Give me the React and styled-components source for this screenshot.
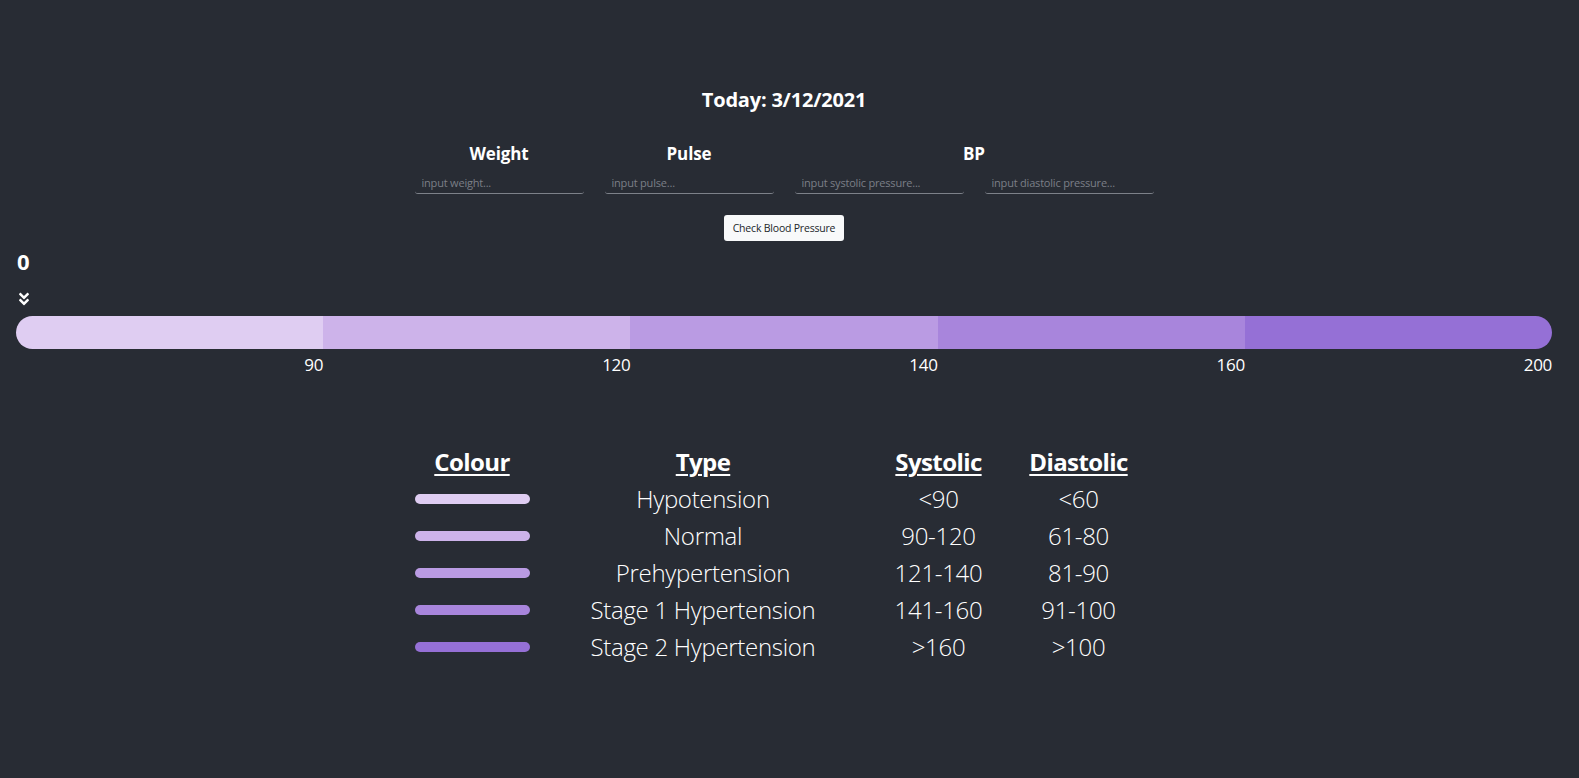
import React from "react";
import styled, { createGlobalStyle } from "styled-components";
import { FaAngleDoubleDown } from "react-icons/fa";

const Global = createGlobalStyle`
  html, body { margin: 0; padding: 0; background: #282c34; }
  body { font-family: "Open Sans", "Noto Sans", sans-serif; color: #ffffff; }
`;

const Page = styled.div`
  width: 1568px;
  min-height: 778px;
  background: #282c34;
  display: flex;
  flex-direction: column;
  align-items: center;
  padding-top: 86px;
  box-sizing: border-box;
`;

const Title = styled.h1`
  margin: 0;
  font-size: 20px;
  font-weight: 700;
  line-height: 28px;
  letter-spacing: -0.2px;
`;

const Form = styled.div`
  display: flex;
  gap: 21px;
  margin-top: 29px;
`;

const Field = styled.div`
  display: flex;
  flex-direction: column;
  align-items: center;
`;

const Label = styled.div`
  font-size: 17px;
  font-weight: 700;
  line-height: 22px;
  letter-spacing: -0.1px;
`;

const Inputs = styled.div`
  display: flex;
  gap: 21px;
  margin-top: 7px;
`;

const Input = styled.input`
  width: 169px;
  height: 22px;
  box-sizing: border-box;
  background: transparent;
  border: none;
  border-bottom: 1px solid #7d8189;
  border-radius: 0 0 3px 3px;
  color: #fff;
  font-family: "Open Sans", sans-serif;
  font-size: 11px;
  letter-spacing: -0.2px;
  padding: 0 7px 1px;
  outline: none;
  &::placeholder { color: #7b7f87; }
`;

const Button = styled.button`
  margin-top: 21px;
  width: 120px;
  height: 26px;
  background: #f8f9fa;
  border: none;
  border-radius: 3px;
  font-family: "Open Sans", sans-serif;
  font-size: 10.5px;
  letter-spacing: -0.2px;
  color: #212529;
  padding: 0;
`;

const Gauge = styled.div`
  align-self: stretch;
  margin: 6px 16px 0;
  display: flex;
  flex-direction: column;
`;

const Value = styled.div`
  font-size: 22px;
  font-weight: 700;
  line-height: 28px;
  padding-left: 1px;
`;

const Pointer = styled.div`
  height: 16px;
  margin-top: 16px;
  display: flex;
  align-items: center;
  font-size: 16px;
  color: #fff;
`;

const Bar = styled.div`
  margin-top: 9px;
  display: flex;
  height: 33px;
  border-radius: 17px;
  overflow: hidden;
`;

const Segment = styled.div`
  flex: 1;
  background: ${(p) => p.$color};
`;

const Ticks = styled.div`
  display: flex;
  padding-top: 2px;
`;

const Tick = styled.div`
  flex: 1;
  text-align: right;
  font-size: 17px;
  line-height: 28px;
  letter-spacing: -0.3px;
`;

const Table = styled.div`
  margin-top: 64px;
  display: grid;
  grid-template-columns: 118px 344px 127px 153px;
  grid-auto-rows: 37px;
  align-items: center;
  justify-items: center;
`;

const Head = styled.div`
  font-size: 24px;
  font-weight: 700;
  text-decoration: underline;
  text-underline-offset: 3px;
  text-decoration-thickness: 2px;
  letter-spacing: -0.6px;
`;

const Cell = styled.div`
  font-size: 24px;
  font-weight: 300;
  letter-spacing: -0.3px;
`;

const Swatch = styled.div`
  width: 115px;
  height: 10px;
  border-radius: 5px;
  background: ${(p) => p.$color};
`;

const colors = ["#dfcdf2", "#cdb3ea", "#ba9be3", "#a885dc", "#9570d6"];
const ticks = ["90", "120", "140", "160", "200"];
const rows = [
  ["Hypotension", "<90", "<60"],
  ["Normal", "90-120", "61-80"],
  ["Prehypertension", "121-140", "81-90"],
  ["Stage 1 Hypertension", "141-160", "91-100"],
  ["Stage 2 Hypertension", ">160", ">100"],
];

export default function App() {
  return (
    <>
      <Global />
      <Page>
        <Title>Today: 3/12/2021</Title>
        <Form>
          <Field>
            <Label>Weight</Label>
            <Inputs>
              <Input placeholder="input weight..." />
            </Inputs>
          </Field>
          <Field>
            <Label>Pulse</Label>
            <Inputs>
              <Input placeholder="input pulse..." />
            </Inputs>
          </Field>
          <Field>
            <Label>BP</Label>
            <Inputs>
              <Input placeholder="input systolic pressure..." />
              <Input placeholder="input diastolic pressure..." />
            </Inputs>
          </Field>
        </Form>
        <Button>Check Blood Pressure</Button>
        <Gauge>
          <Value>0</Value>
          <Pointer>
            <FaAngleDoubleDown />
          </Pointer>
          <Bar>
            {colors.map((c) => (
              <Segment key={c} $color={c} />
            ))}
          </Bar>
          <Ticks>
            {ticks.map((t) => (
              <Tick key={t}>{t}</Tick>
            ))}
          </Ticks>
        </Gauge>
        <Table>
          <Head>Colour</Head>
          <Head>Type</Head>
          <Head>Systolic</Head>
          <Head>Diastolic</Head>
          {rows.map((r, i) => (
            <React.Fragment key={r[0]}>
              <Swatch $color={colors[i]} />
              <Cell>{r[0]}</Cell>
              <Cell>{r[1]}</Cell>
              <Cell>{r[2]}</Cell>
            </React.Fragment>
          ))}
        </Table>
      </Page>
    </>
  );
}
